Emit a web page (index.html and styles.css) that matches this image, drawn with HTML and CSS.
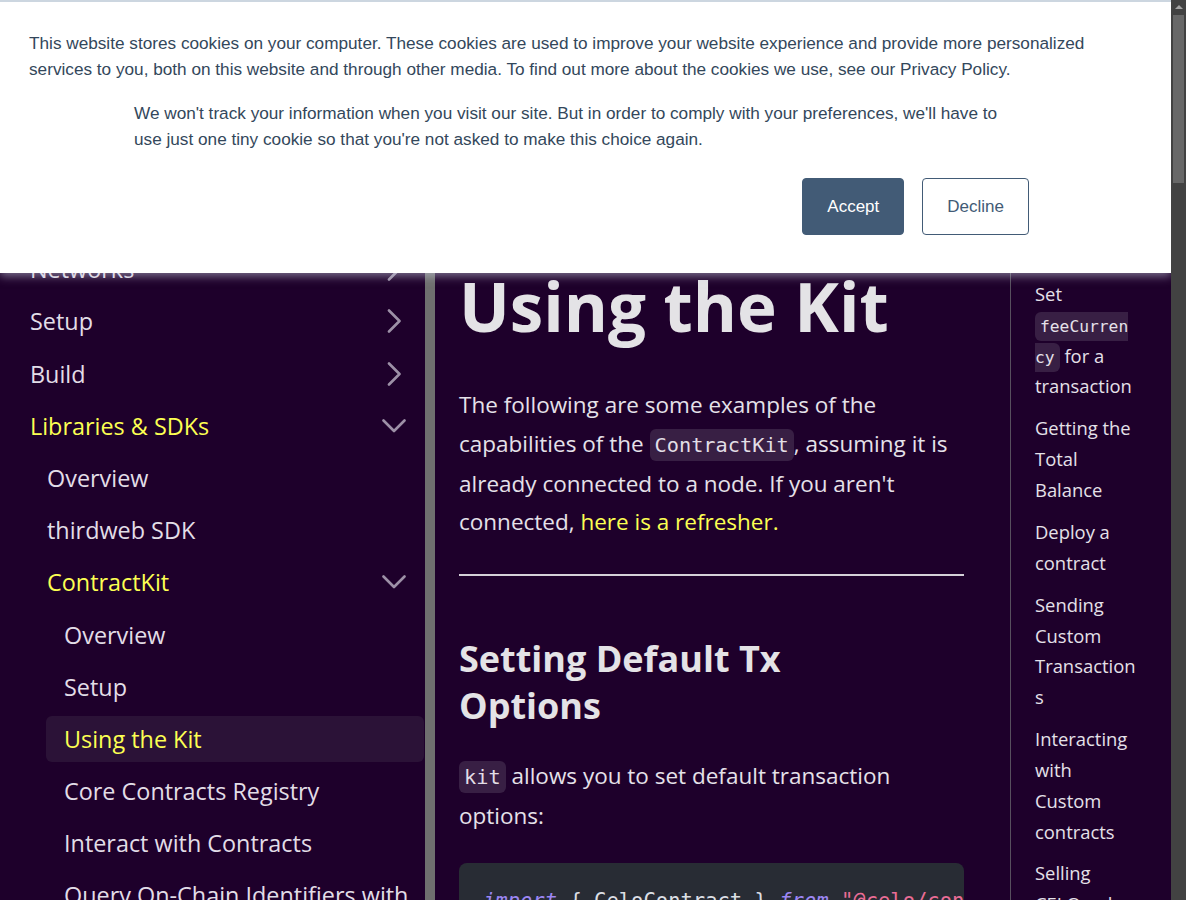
FILE: index.html
```html
<!DOCTYPE html>
<html lang="en">
<head>
<meta charset="utf-8">
<title>Using the Kit</title>
<link rel="stylesheet" href="styles.css">
</head>
<body>
<div class="app">
  <div class="page">
    <div class="layout">
      <aside class="sidebar">
        <nav class="sidebar-inner">
          <ul class="menu">
            <li><a class="menu-link" href="#">Networks<svg viewBox="0 0 24 24"><polyline points="7,1.5 17.5,12 7,22.5"/></svg></a></li>
            <li><a class="menu-link" href="#">Setup<svg viewBox="0 0 24 24"><polyline points="7,1.5 17.5,12 7,22.5"/></svg></a></li>
            <li><a class="menu-link" href="#">Build<svg viewBox="0 0 24 24"><polyline points="7,1.5 17.5,12 7,22.5"/></svg></a></li>
            <li><a class="menu-link cat-active" href="#">Libraries &amp; SDKs<svg viewBox="0 0 24 24"><polyline points="1.5,6.5 12,17 22.5,6.5"/></svg></a>
              <ul class="menu">
                <li><a class="menu-link leaf" href="#">Overview</a></li>
                <li><a class="menu-link leaf" href="#">thirdweb SDK</a></li>
                <li><a class="menu-link cat-active" href="#">ContractKit<svg viewBox="0 0 24 24"><polyline points="1.5,6.5 12,17 22.5,6.5"/></svg></a>
                  <ul class="menu">
                    <li><a class="menu-link leaf" href="#">Overview</a></li>
                    <li><a class="menu-link leaf" href="#">Setup</a></li>
                    <li><a class="menu-link leaf active" href="#">Using the Kit</a></li>
                    <li><a class="menu-link leaf" href="#">Core Contracts Registry</a></li>
                    <li><a class="menu-link leaf" href="#">Interact with Contracts</a></li>
                    <li><a class="menu-link leaf" href="#">Query On-Chain Identifiers with SocialConnect</a></li>
                  </ul>
                </li>
              </ul>
            </li>
          </ul>
        </nav>
        <div class="sidebar-track"></div>
      </aside>

      <main class="doc">
        <h1>Using the Kit</h1>
        <p>The following are some examples of the capabilities of the <code>ContractKit</code>, assuming it is already connected to a node. If you aren't connected, <a class="link" href="#">here is a refresher.</a></p>
        <hr>
        <h2>Setting Default Tx<br>Options</h2>
        <p class="p2"><code>kit</code> allows you to set default transaction options:</p>
        <pre class="codeblock"><code><span class="kw">import</span> { CeloContract } <span class="kw">from</span> <span class="str">"@celo/contractkit"</span>;</code></pre>
      </main>

      <nav class="toc">
        <ul>
          <li><a href="#">Set <code>feeCurrency</code> for a transaction</a></li>
          <li><a href="#">Getting the Total Balance</a></li>
          <li><a href="#">Deploy a contract</a></li>
          <li><a href="#">Sending Custom Transactions</a></li>
          <li><a href="#">Interacting with Custom contracts</a></li>
          <li><a href="#">Selling CELO only if the rate is favorable</a></li>
        </ul>
      </nav>
    </div>

    <div class="cookie-banner">
      <p class="cookie-text">This website stores cookies on your computer. These cookies are used to improve your website experience and provide more personalized services to you, both on this website and through other media. To find out more about the cookies we use, see our Privacy Policy.</p>
      <p class="cookie-sub">We won't track your information when you visit our site. But in order to comply with your preferences, we'll have to use just one tiny cookie so that you're not asked to make this choice again.</p>
      <div class="cookie-actions">
        <button class="btn btn-accept">Accept</button>
        <button class="btn btn-decline">Decline</button>
      </div>
    </div>
  </div>

  <div class="scrollbar">
    <div class="scroll-arrow"></div>
    <div class="scroll-thumb"></div>
  </div>
</div>
</body>
</html>
```

FILE: styles.css
```css
* { box-sizing: border-box; }

html, body {
  margin: 0;
  height: 900px;
  overflow: hidden;
}

body {
  background: #1e002b;
  font-family: "Open Sans", "Noto Sans", sans-serif;
}

.app {
  display: flex;
  height: 900px;
}

.page {
  position: relative;
  width: 1171px;
  height: 900px;
  overflow: hidden;
  background: #1e002b;
  flex: none;
}

.layout {
  display: flex;
  height: 100%;
}

/* ---------- sidebar ---------- */
.sidebar {
  width: 435px;
  flex: none;
  display: flex;
}

.sidebar-inner {
  width: 425px;
  padding: 240px 1px 0 12px;
}

.sidebar-track {
  width: 10px;
  background: #6f6f6f;
}

.menu {
  list-style: none;
  margin: 0;
  padding: 0;
}

.menu .menu {
  padding-left: 17px;
}

.menu li {
  margin-top: 6.2px;
}

.menu-link {
  display: flex;
  align-items: center;
  justify-content: space-between;
  padding: 8px 18px 8px 18px;
  font-size: 23.4px;
  line-height: 30px;
  font-weight: 500;
  color: #e2dde7;
  border-radius: 6px;
  text-decoration: none;
}

.menu-link.leaf {
  padding-right: 4px;
}

.menu-link svg {
  width: 24px;
  height: 24px;
  flex: none;
  fill: none;
  stroke: #9d90a7;
  stroke-width: 2.6;
  stroke-linecap: round;
  stroke-linejoin: round;
}

.menu-link.cat-active {
  color: #fcff52;
}

.menu-link.active {
  background: #2b1237;
  color: #fcff52;
}

/* ---------- main ---------- */
.doc {
  width: 575px;
  flex: none;
  padding: 266px 46px 0 24px;
  color: #e5e1e9;
}

.doc h1 {
  margin: 0 0 38.6px;
  font-size: 67.3px;
  line-height: 81.6px;
  font-weight: 700;
  color: #e4e3e6;
}

.doc p {
  margin: 0;
  font-size: 22.5px;
  line-height: 38.7px;
}

.doc code {
  font-family: "DejaVu Sans Mono", monospace;
  font-size: 20.3px;
  background: #381f44;
  border-radius: 6px;
  padding: 4px 5px;
  color: #e2dee6;
}

.link {
  color: #fcff52;
  text-decoration: none;
}

.doc hr {
  margin: 32px 0 0;
  height: 2px;
  border: 0;
  background: #d4d0d8;
}

.doc h2 {
  margin: 58.5px 0 28.5px;
  font-size: 36px;
  line-height: 47px;
  font-weight: 700;
  color: #e4e3e6;
}

.codeblock {
  margin: 28px 0 0;
  padding: 23px 24px;
  background: #282c34;
  border-radius: 8px;
  overflow: hidden;
  white-space: pre;
}

.codeblock code {
  background: none;
  padding: 0;
  font-size: 20.5px;
  line-height: 30.75px;
  color: #dcdfe4;
}

.kw {
  color: #9c86f2;
  font-style: italic;
}

.str {
  color: #ea6d96;
}

/* ---------- toc ---------- */
.toc {
  width: 161px;
  flex: none;
  border-left: 1px solid #574f5e;
  padding: 279px 34.5px 0 24px;
}

.toc ul {
  list-style: none;
  margin: 0;
  padding: 0;
}

.toc li {
  font-size: 18.4px;
  line-height: 30.8px;
  overflow-wrap: anywhere;
}

.toc li + li {
  margin-top: 11.2px;
}

.toc a {
  color: #e5e1e9;
  text-decoration: none;
}

.toc code {
  font-family: "DejaVu Sans Mono", monospace;
  font-size: 16.3px;
  line-height: 1;
  background: #381f44;
  border-radius: 6px;
  padding: 5px 5px;
}

/* ---------- cookie banner ---------- */
.cookie-banner {
  position: absolute;
  top: 0;
  left: 0;
  width: 1171px;
  height: 273px;
  background: #ffffff;
  border-top: 2px solid #ccd6e0;
  padding: 28px 29px 0;
  box-shadow: 0 3px 9px rgba(205, 210, 228, 0.55);
  font-family: "Liberation Sans", Arial, sans-serif;
  font-size: 17.2px;
  line-height: 26px;
  color: #33475b;
  z-index: 2;
}

.cookie-text {
  margin: 0;
  width: 1080px;
}

.cookie-sub {
  width: 895px;
  margin: 18px 0 0 105px;
}

.cookie-actions {
  width: 1000px;
  margin-top: 26px;
  display: flex;
  justify-content: flex-end;
  gap: 18px;
}

.btn {
  height: 57px;
  padding: 0 24px;
  border-radius: 4px;
  font-family: "Liberation Sans", Arial, sans-serif;
  font-size: 17px;
  cursor: pointer;
}

.btn-accept {
  background: #425b76;
  border: 1px solid #425b76;
  color: #ffffff;
}

.btn-decline {
  background: #ffffff;
  border: 1px solid #425b76;
  color: #425b76;
}

/* ---------- window scrollbar ---------- */
.scrollbar {
  width: 15px;
  flex: none;
  background: #424242;
  display: flex;
  flex-direction: column;
  align-items: center;
}

.scroll-arrow {
  margin-top: 5px;
  width: 0;
  height: 0;
  border-left: 4px solid transparent;
  border-right: 4px solid transparent;
  border-bottom: 4px solid #a3a3a3;
}

.scroll-thumb {
  margin-top: 6px;
  width: 11px;
  height: 168px;
  background: #686868;
}
```
